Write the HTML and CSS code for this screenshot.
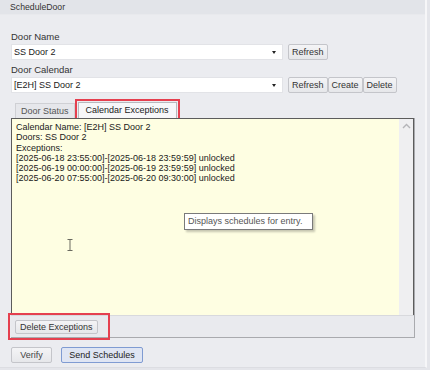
FILE: index.html
```html
<!DOCTYPE html>
<html>
<head>
<meta charset="utf-8">
<link rel="stylesheet" href="styles.css">
</head>
<body>
<div class="window">
  <div class="title">ScheduleDoor</div>
  <div class="content">
    <div class="label first">Door Name</div>
    <div class="row">
      <div class="combo"><span>SS Door 2</span><span class="arrow"></span></div>
      <button class="btn">Refresh</button>
    </div>
    <div class="label">Door Calendar</div>
    <div class="row">
      <div class="combo"><span>[E2H] SS Door 2</span><span class="arrow"></span></div>
      <div class="group">
        <button class="btn">Refresh</button><button class="btn">Create</button><button class="btn">Delete</button>
      </div>
    </div>
    <div class="tabs">
      <div class="tab">Door Status</div>
      <div class="tab active">Calendar Exceptions</div>
    </div>
    <div class="page">
      <div class="textarea">
        <div class="text">
          <div>Calendar Name: [E2H] SS Door 2</div>
          <div>Doors: SS Door 2</div>
          <div>Exceptions:</div>
          <div>[2025-06-18 23:55:00]-[2025-06-18 23:59:59] unlocked</div>
          <div>[2025-06-19 00:00:00]-[2025-06-19 23:59:59] unlocked</div>
          <div>[2025-06-20 07:55:00]-[2025-06-20 09:30:00] unlocked</div>
        </div>
        <div class="scroll">
          <svg width="9" height="6" viewBox="0 0 9 6"><path d="M1 5 L4.5 1.5 L8 5" fill="none" stroke="#b4b4b8" stroke-width="1.4"/></svg>
        </div>
        <div class="tooltip">Displays schedules for entry.</div>
        <svg class="ibeam" width="6" height="12" viewBox="0 0 6 12"><path d="M0.5 0.5 H5.5 M3 0.5 V11.5 M0.5 11.5 H5.5" fill="none" stroke="#6a6a60" stroke-width="1"/></svg>
      </div>
      <div class="pagefoot">
        <button class="btn wide">Delete Exceptions</button>
        <span class="mark"></span>
      </div>
    </div>
    <div class="actions">
      <button class="btn verify">Verify</button>
      <button class="btn primary">Send Schedules</button>
    </div>
  </div>
</div>
</body>
</html>
```
FILE: styles.css
```css
* { box-sizing: border-box; }
html, body { margin: 0; padding: 0; }
body {
  width: 430px;
  height: 370px;
  background: #e4e5ea;
  font-family: "Liberation Sans", Arial, sans-serif;
  font-size: 9px;
  color: #222;
  overflow: hidden;
}
.window {
  width: 427px;
  height: 368px;
  background: #ebecf0;
  border-right: 2px solid #f6f6f8;
  border-bottom: 1px solid #dcdde2;
}
.title {
  height: 15px;
  line-height: 15px;
  padding-left: 10px;
  background: #e2e4e9;
  border-bottom: 1px solid #e8e9ed;
  color: #333;
  font-size: 8.7px;
}
.content {
  padding-left: 11px;
  display: flex;
  flex-direction: column;
}
.label {
  font-size: 9.5px;
  line-height: 11px;
  color: #333;
  margin-top: 4px;
  height: 11px;
}
.label.first { margin-top: 16px; }
.row {
  display: flex;
  align-items: center;
  margin-top: 2px;
  height: 16px;
}
.combo {
  width: 272px;
  height: 16px;
  background: #fff;
  border: 1px solid #e2e3e7;
  display: flex;
  align-items: center;
  justify-content: space-between;
  padding: 0 5px 0 2px;
  font-size: 9px;
  color: #1a1a1a;
}
.arrow {
  width: 0;
  height: 0;
  border-left: 2.5px solid transparent;
  border-right: 2.5px solid transparent;
  border-top: 3px solid #222;
  margin-right: 1px;
}
.btn {
  font-family: "Liberation Sans", Arial, sans-serif;
  font-size: 9px;
  color: #333;
  height: 16px;
  padding: 0 3px;
  background: linear-gradient(#f4f4f6, #e6e7ea);
  border: 1px solid #c4c5ca;
  border-radius: 2px;
  margin: 0;
  line-height: 14px;
}
.row > .btn { margin-left: 5px; height: 16px; }
.group { display: flex; margin-left: 5px; }
.group .btn { height: 16px; }
.tabs {
  display: flex;
  align-items: flex-end;
  margin-top: 9px;
  height: 16px;
  padding-left: 4px;
}
.tab {
  height: 15px;
  line-height: 14px;
  padding: 0 5px;
  border: 1px solid #cfd0d4;
  border-bottom: none;
  background: #e6e7eb;
  color: #555;
  font-size: 9px;
}
.tab.active {
  height: 16px;
  margin-left: 3px;
  padding: 0 7px;
  background: #f7f7f9;
  color: #222;
  border-color: #b8b9be;
  outline: 2px solid #e5404f;
  outline-offset: 1px;
}
.page {
  width: 404px;
  border-right: 1px solid #a9aaae;
  border-bottom: 1px solid #a9aaae;
  display: flex;
  flex-direction: column;
}
.textarea {
  position: relative;
  height: 197px;
  display: flex;
  border: 1px solid #5c5c5c;
  border-bottom: none;
  background: #fefee2;
}
.text {
  flex: 1;
  padding: 3px 0 0 4px;
  line-height: 10.3px;
  font-size: 9px;
  color: #1a1a1a;
}
.scroll {
  width: 14px;
  background: #efeff1;
  display: flex;
  justify-content: center;
  padding-top: 4px;
}
.scroll svg { display: block; }
.tooltip {
  position: absolute;
  left: 172px;
  top: 94px;
  width: 129px;
  height: 17px;
  line-height: 15px;
  padding-left: 3px;
  background: #fff;
  border: 1px solid #7a7a7a;
  box-shadow: 2px 2px 2px rgba(0,0,0,0.22);
  color: #555;
  font-size: 9px;
}
.ibeam {
  position: absolute;
  left: 55px;
  top: 120px;
}
.pagefoot {
  position: relative;
  height: 22px;
  background: #e9eaee;
  border-top: 1px solid #d8d9dd;
  display: flex;
  align-items: center;
  padding-left: 4px;
}
.btn.wide { height: 14px; line-height: 12px; padding: 0 4px; }
.mark {
  position: absolute;
  left: -3px;
  top: -3px;
  width: 102px;
  height: 27px;
  border: 2px solid #e5404f;
}
.actions {
  display: flex;
  margin-top: 9px;
  gap: 9px;
}
.btn.verify { width: 41px; height: 16px; color: #444; }
.btn.primary {
  width: 82px;
  height: 16px;
  background: #dfe5f3;
  border: 1px solid #7f9bd2;
  color: #222;
}
```
